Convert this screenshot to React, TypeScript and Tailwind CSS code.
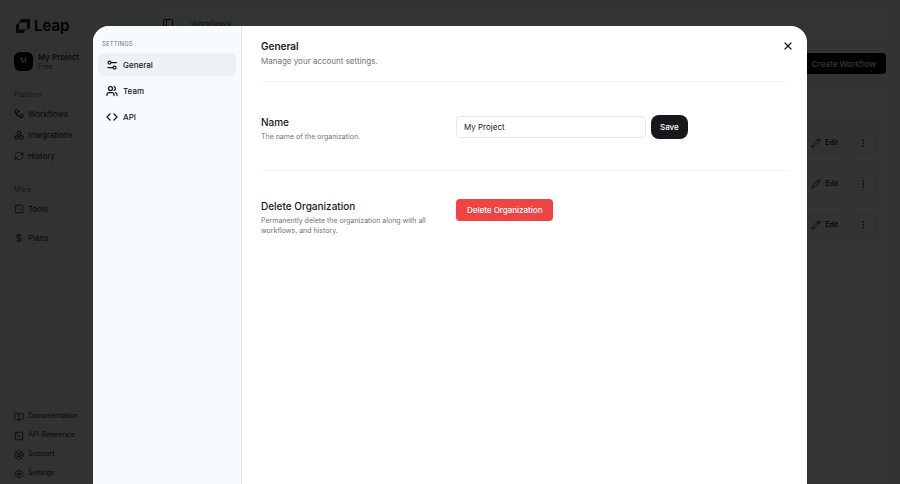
import React, { useState } from 'react';
import {
  BookOpen,
  Code,
  DollarSign,
  EllipsisVertical,
  LifeBuoy,
  PanelLeft,
  Pencil,
  RefreshCw,
  Settings,
  SquareTerminal,
  Users,
  X,
} from 'lucide-react';

interface IconProps {
  className?: string;
}

interface NavItem {
  label: string;
  icon: React.ElementType;
}

function WorkflowIcon({ className }: IconProps) {
  return (
    <svg className={className} viewBox="0 0 24 24" fill="none" stroke="currentColor" strokeWidth="2.5" strokeLinecap="round" aria-hidden="true">
      <circle cx="6" cy="6" r="4" />
      <circle cx="18" cy="17" r="4" />
      <path d="M6 10v2a5 5 0 0 0 5 5h3M10 6h3" />
    </svg>
  );
}

function IntegrationsIcon({ className }: IconProps) {
  return (
    <svg className={className} viewBox="0 0 24 24" fill="none" stroke="currentColor" strokeWidth="2.5" strokeLinejoin="round" aria-hidden="true">
      <path d="M12 2l4 2.500v5L12 12l-4-2.500v-5z" />
      <path d="M6 13l4 2.500v4.500L6 22.500 2 20v-4.500z" />
      <path d="M18 13l4 2.500v4.500l-4 2.500-4-2.500v-4.500z" />
    </svg>
  );
}

function SlidersIcon({ className }: IconProps) {
  return (
    <svg className={className} viewBox="0 0 24 24" fill="none" stroke="currentColor" strokeWidth="2.5" strokeLinecap="round" aria-hidden="true">
      <circle cx="7" cy="7" r="3" />
      <circle cx="17" cy="17" r="3" />
      <path d="M10 7h11M4 17h10" />
    </svg>
  );
}

function LeapLogo({ className }: IconProps) {
  return (
    <svg className={className} viewBox="0 0 28 28" fill="currentColor" aria-hidden="true">
      <path d="M10 0h18v17l-6 5V7H5z" />
      <path d="M6 7v14h14l-5 7H0V12z" />
    </svg>
  );
}

const platformLinks: NavItem[] = [
  { label: 'Workflows', icon: WorkflowIcon },
  { label: 'Integrations', icon: IntegrationsIcon },
  { label: 'History', icon: RefreshCw },
];

const moreLinks: NavItem[] = [
  { label: 'Tools', icon: SquareTerminal },
  { label: 'Plans', icon: DollarSign },
];

const footerLinks: NavItem[] = [
  { label: 'Documentation', icon: BookOpen },
  { label: 'API Reference', icon: SquareTerminal },
  { label: 'Support', icon: LifeBuoy },
  { label: 'Settings', icon: Settings },
];

const tabs: NavItem[] = [
  { label: 'General', icon: SlidersIcon },
  { label: 'Team', icon: Users },
  { label: 'API', icon: Code },
];

function SidebarLink({ label, icon: Icon }: NavItem) {
  return (
    <a href="#" className="flex items-center gap-1 h-[21px]">
      <Icon className="w-2.5 h-2.5" />
      {label}
    </a>
  );
}

function Sidebar() {
  return (
    <aside className="w-[154px] shrink-0 flex flex-col pl-3.5 pt-4 pb-px bg-gray-50">
      <div className="flex items-center gap-1 h-5 pl-0.5">
        <LeapLogo className="w-3.5 h-3.5" />
        <span className="text-[15px] leading-5 font-semibold text-black">Leap</span>
      </div>

      <div className="flex items-center gap-[5px] mt-4 h-[19px]">
        <span className="w-[19px] h-[19px] rounded-md bg-black text-white text-[7px] flex items-center justify-center">M</span>
        <div>
          <p className="text-[8px] leading-[10px] font-medium">My Project</p>
          <p className="text-[7px] leading-[9px] text-zinc-600">Free</p>
        </div>
      </div>

      <nav className="mt-[18px] text-[8px]">
        <p className="text-[7px] leading-3 mb-0.5 text-zinc-500">Platform</p>
        {platformLinks.map((item) => (
          <SidebarLink key={item.label} {...item} />
        ))}
      </nav>

      <nav className="mt-[18px] text-[8px]">
        <p className="text-[7px] leading-3 mb-0.5 text-zinc-500">More</p>
        <div className="space-y-2">
          {moreLinks.map((item) => (
            <SidebarLink key={item.label} {...item} />
          ))}
        </div>
      </nav>

      <nav className="mt-auto text-[7px]">
        {footerLinks.map(({ label, icon: Icon }) => (
          <a key={label} href="#" className="flex items-center gap-1 h-[19px]">
            <Icon className="w-2.5 h-2.5" />
            {label}
          </a>
        ))}
      </nav>
    </aside>
  );
}

function WorkflowsPage() {
  return (
    <div className="flex-1 bg-gray-50 pt-1 pr-1.5">
      <main className="h-full bg-white border border-gray-100 rounded-t-lg">
        <header className="flex items-center h-[38px] px-[7px] border-b border-gray-100 text-[8px] text-zinc-600">
          <PanelLeft className="w-3 h-3 text-zinc-800" />
          <span className="w-px h-2.5 bg-gray-200 mx-2" />
          Workflows
        </header>

        <div className="flex justify-end px-[7px] py-2.5 border-b border-gray-100">
          <button className="h-[21px] px-2.5 rounded bg-black text-white text-[8px] font-medium">Create Workflow</button>
        </div>

        <div className="mt-[37px] px-[7px]">
          {[1, 2, 3].map((row) => (
            <div key={row} className="flex justify-end items-center gap-1 h-[41px] pr-2.5 border-t border-gray-100">
              <button className="flex items-center gap-1 h-[20px] px-[7px] rounded border border-gray-200 text-[7px] font-medium text-zinc-900">
                <Pencil className="w-2.5 h-2.5" />
                Edit
              </button>
              <button aria-label="More actions" className="flex items-center justify-center h-[20px] w-[26px] rounded border border-gray-200">
                <EllipsisVertical className="w-2.5 h-2.5" />
              </button>
            </div>
          ))}
        </div>
      </main>
    </div>
  );
}

function SettingsDialog() {
  const [activeTab, setActiveTab] = useState('General');
  const [name, setName] = useState('My Project');

  return (
    <div role="dialog" aria-label="Settings" className="flex w-full bg-white rounded-t-2xl overflow-hidden text-zinc-900">
      <nav className="w-[149px] shrink-0 bg-[#f6fbfe] border-r border-gray-200 px-[5px] pt-3">
        <p className="pl-1 mb-[3px] text-[6px] leading-3 uppercase text-zinc-500 tracking-wide">Settings</p>
        <div className="flex flex-col gap-[3px]">
          {tabs.map(({ label, icon: Icon }) => (
            <button
              key={label}
              onClick={() => setActiveTab(label)}
              className={`flex items-center gap-[5px] h-[23px] px-2 rounded-md text-[8px] font-medium ${
                activeTab === label ? 'bg-[#edf1f4]' : ''
              }`}
            >
              <Icon className="w-3 h-3" strokeWidth={2.5} />
              {label}
            </button>
          ))}
        </div>
      </nav>

      <div className="flex-1 px-[19px] pt-3.5">
        <div className="flex items-start justify-between pb-[15px] border-b border-gray-100">
          <div>
            <h2 className="text-[10px] leading-3 font-semibold">General</h2>
            <p className="mt-1 text-[8px] leading-[10px] text-zinc-500">Manage your account settings.</p>
          </div>
          <button aria-label="Close" className="-mr-1.5">
            <X className="w-3 h-3" strokeWidth={2.5} />
          </button>
        </div>

        <section className="grid grid-cols-[195px_1fr] items-start pt-[33px] pb-7 border-b border-gray-100">
          <div>
            <label htmlFor="org-name" className="block text-[10px] leading-[14px] font-medium">Name</label>
            <p className="mt-[3px] text-[7px] leading-[10px] text-zinc-500">The name of the organization.</p>
          </div>
          <form className="flex items-center gap-[5px]" onSubmit={(e) => e.preventDefault()}>
            <input
              id="org-name"
              value={name}
              onChange={(e) => setName(e.target.value)}
              className="w-[190px] h-[22px] px-[7px] rounded border border-gray-200 text-[8px]"
            />
            <button type="submit" className="h-6 px-[9px] rounded-lg bg-[#18181b] text-white text-[8px] font-medium">
              Save
            </button>
          </form>
        </section>

        <section className="grid grid-cols-[195px_1fr] items-start pt-7">
          <div className="pr-6">
            <h3 className="text-[10px] leading-[14px] font-medium">Delete Organization</h3>
            <p className="mt-[3px] text-[7px] leading-[10px] text-zinc-500">
              Permanently delete the organization along with all workflows, and history.
            </p>
          </div>
          <button className="justify-self-start h-[22px] px-[11px] rounded bg-[#ef4444] text-white text-[8px] font-medium">
            Delete Organization
          </button>
        </section>
      </div>
    </div>
  );
}

export default function App() {
  return (
    <div className="relative h-screen overflow-hidden bg-white font-['Inter',sans-serif] text-zinc-800">
      <div className="flex h-full">
        <Sidebar />
        <WorkflowsPage />
      </div>

      <div className="absolute inset-0 bg-black/80 flex justify-center px-[93px] pt-[26px]">
        <SettingsDialog />
      </div>
    </div>
  );
}
